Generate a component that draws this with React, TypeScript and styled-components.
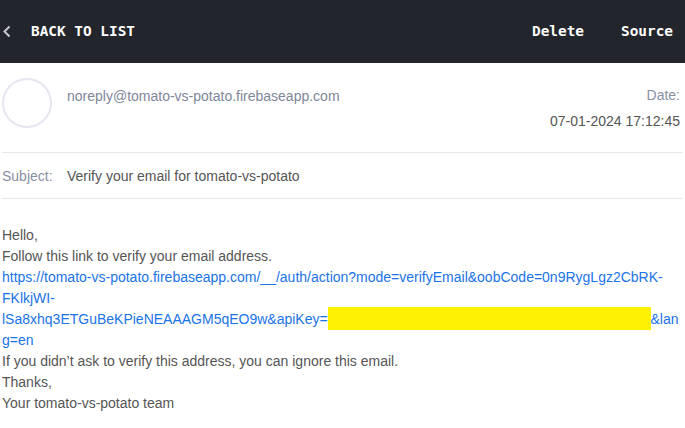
import React from "react";
import styled, { createGlobalStyle } from "styled-components";

const Global = createGlobalStyle`
  html, body { margin: 0; padding: 0; background: #ffffff; }
  body { font-family: "Liberation Sans", Arial, sans-serif; }
  * { box-sizing: border-box; }
`;

const Page = styled.div`
  width: 685px;
  min-height: 428px;
  background: #fff;
`;

const TopBar = styled.header`
  height: 63px;
  background: #22252b;
  display: flex;
  align-items: center;
  padding: 0 12px 1px 2px;
  font-family: "DejaVu Sans Mono", monospace;
  font-weight: bold;
  font-size: 14.4px;
  color: #ffffff;
`;

const BackButton = styled.div`
  display: flex;
  align-items: center;
  gap: 19px;
  flex: 1;
`;

const Chevron = styled.svg`
  width: 10px;
  height: 13px;
  display: block;
`;

const Actions = styled.div`
  display: flex;
  gap: 37px;
`;

const Action = styled.span``;

const SenderRow = styled.section`
  display: flex;
  align-items: flex-start;
  padding: 15px 3px 0 0;
  height: 90px;
  border-bottom: 1px solid #e8e8ec;
  margin: 0 2px;
`;

const Avatar = styled.div`
  width: 50px;
  height: 50px;
  border-radius: 50%;
  border: 2px solid #e6e5f0;
  flex: none;
`;

const Sender = styled.div`
  flex: 1;
  margin-left: 15px;
  margin-top: 10px;
  font-size: 14px;
  color: #80869a;
`;

const DateCol = styled.div`
  display: flex;
  flex-direction: column;
  align-items: flex-end;
  font-size: 14px;
  line-height: 26px;
  margin-top: 4px;
`;

const DateLabel = styled.span`
  color: #8a8fa2;
`;

const DateValue = styled.span`
  color: #555555;
`;

const SubjectRow = styled.section`
  display: flex;
  align-items: center;
  height: 46px;
  margin: 0 2px;
  border-bottom: 1px solid #e8e8ec;
  font-size: 14px;
`;

const SubjectLabel = styled.span`
  color: #8a8fa2;
  width: 65px;
  flex: none;
`;

const SubjectText = styled.span`
  color: #555555;
`;

const Body = styled.div`
  padding: 26px 4px 0 2px;
  font-size: 14px;
  line-height: 21px;
  color: #555555;
  overflow-wrap: anywhere;
`;

const Line = styled.div``;

const Link = styled.a`
  color: #1a73e8;
  text-decoration: none;
`;

const Redacted = styled.span`
  background: #fff200;
  padding: 4px 0 3px;
`;

const REDACTED = "\u00a0".repeat(83);

export default function App() {
  return (
    <Page>
      <Global />
      <TopBar>
        <BackButton>
          <Chevron viewBox="0 0 10 13">
            <path d="M7.5 1.5 L2.5 6.5 L7.5 11.5" fill="none" stroke="#c6c8cc" strokeWidth="2" />
          </Chevron>
          <span>BACK TO LIST</span>
        </BackButton>
        <Actions>
          <Action>Delete</Action>
          <Action>Source</Action>
        </Actions>
      </TopBar>
      <SenderRow>
        <Avatar />
        <Sender>noreply@tomato-vs-potato.firebaseapp.com</Sender>
        <DateCol>
          <DateLabel>Date:</DateLabel>
          <DateValue>07-01-2024 17:12:45</DateValue>
        </DateCol>
      </SenderRow>
      <SubjectRow>
        <SubjectLabel>Subject:</SubjectLabel>
        <SubjectText>Verify your email for tomato-vs-potato</SubjectText>
      </SubjectRow>
      <Body>
        <Line>Hello,</Line>
        <Line>Follow this link to verify your email address.</Line>
        <Line>
          <Link href="#">
            https://tomato-vs-potato.firebaseapp.com/__/auth/action?mode=verifyEmail&amp;oobCode=0n9RygLgz2CbRK-FKlkjWI-lSa8xhq3ETGuBeKPieNEAAAGM5qEO9w&amp;apiKey=<Redacted>{REDACTED}</Redacted>&amp;lang=en
          </Link>
        </Line>
        <Line>If you didn’t ask to verify this address, you can ignore this email.</Line>
        <Line>Thanks,</Line>
        <Line>Your tomato-vs-potato team</Line>
      </Body>
    </Page>
  );
}
